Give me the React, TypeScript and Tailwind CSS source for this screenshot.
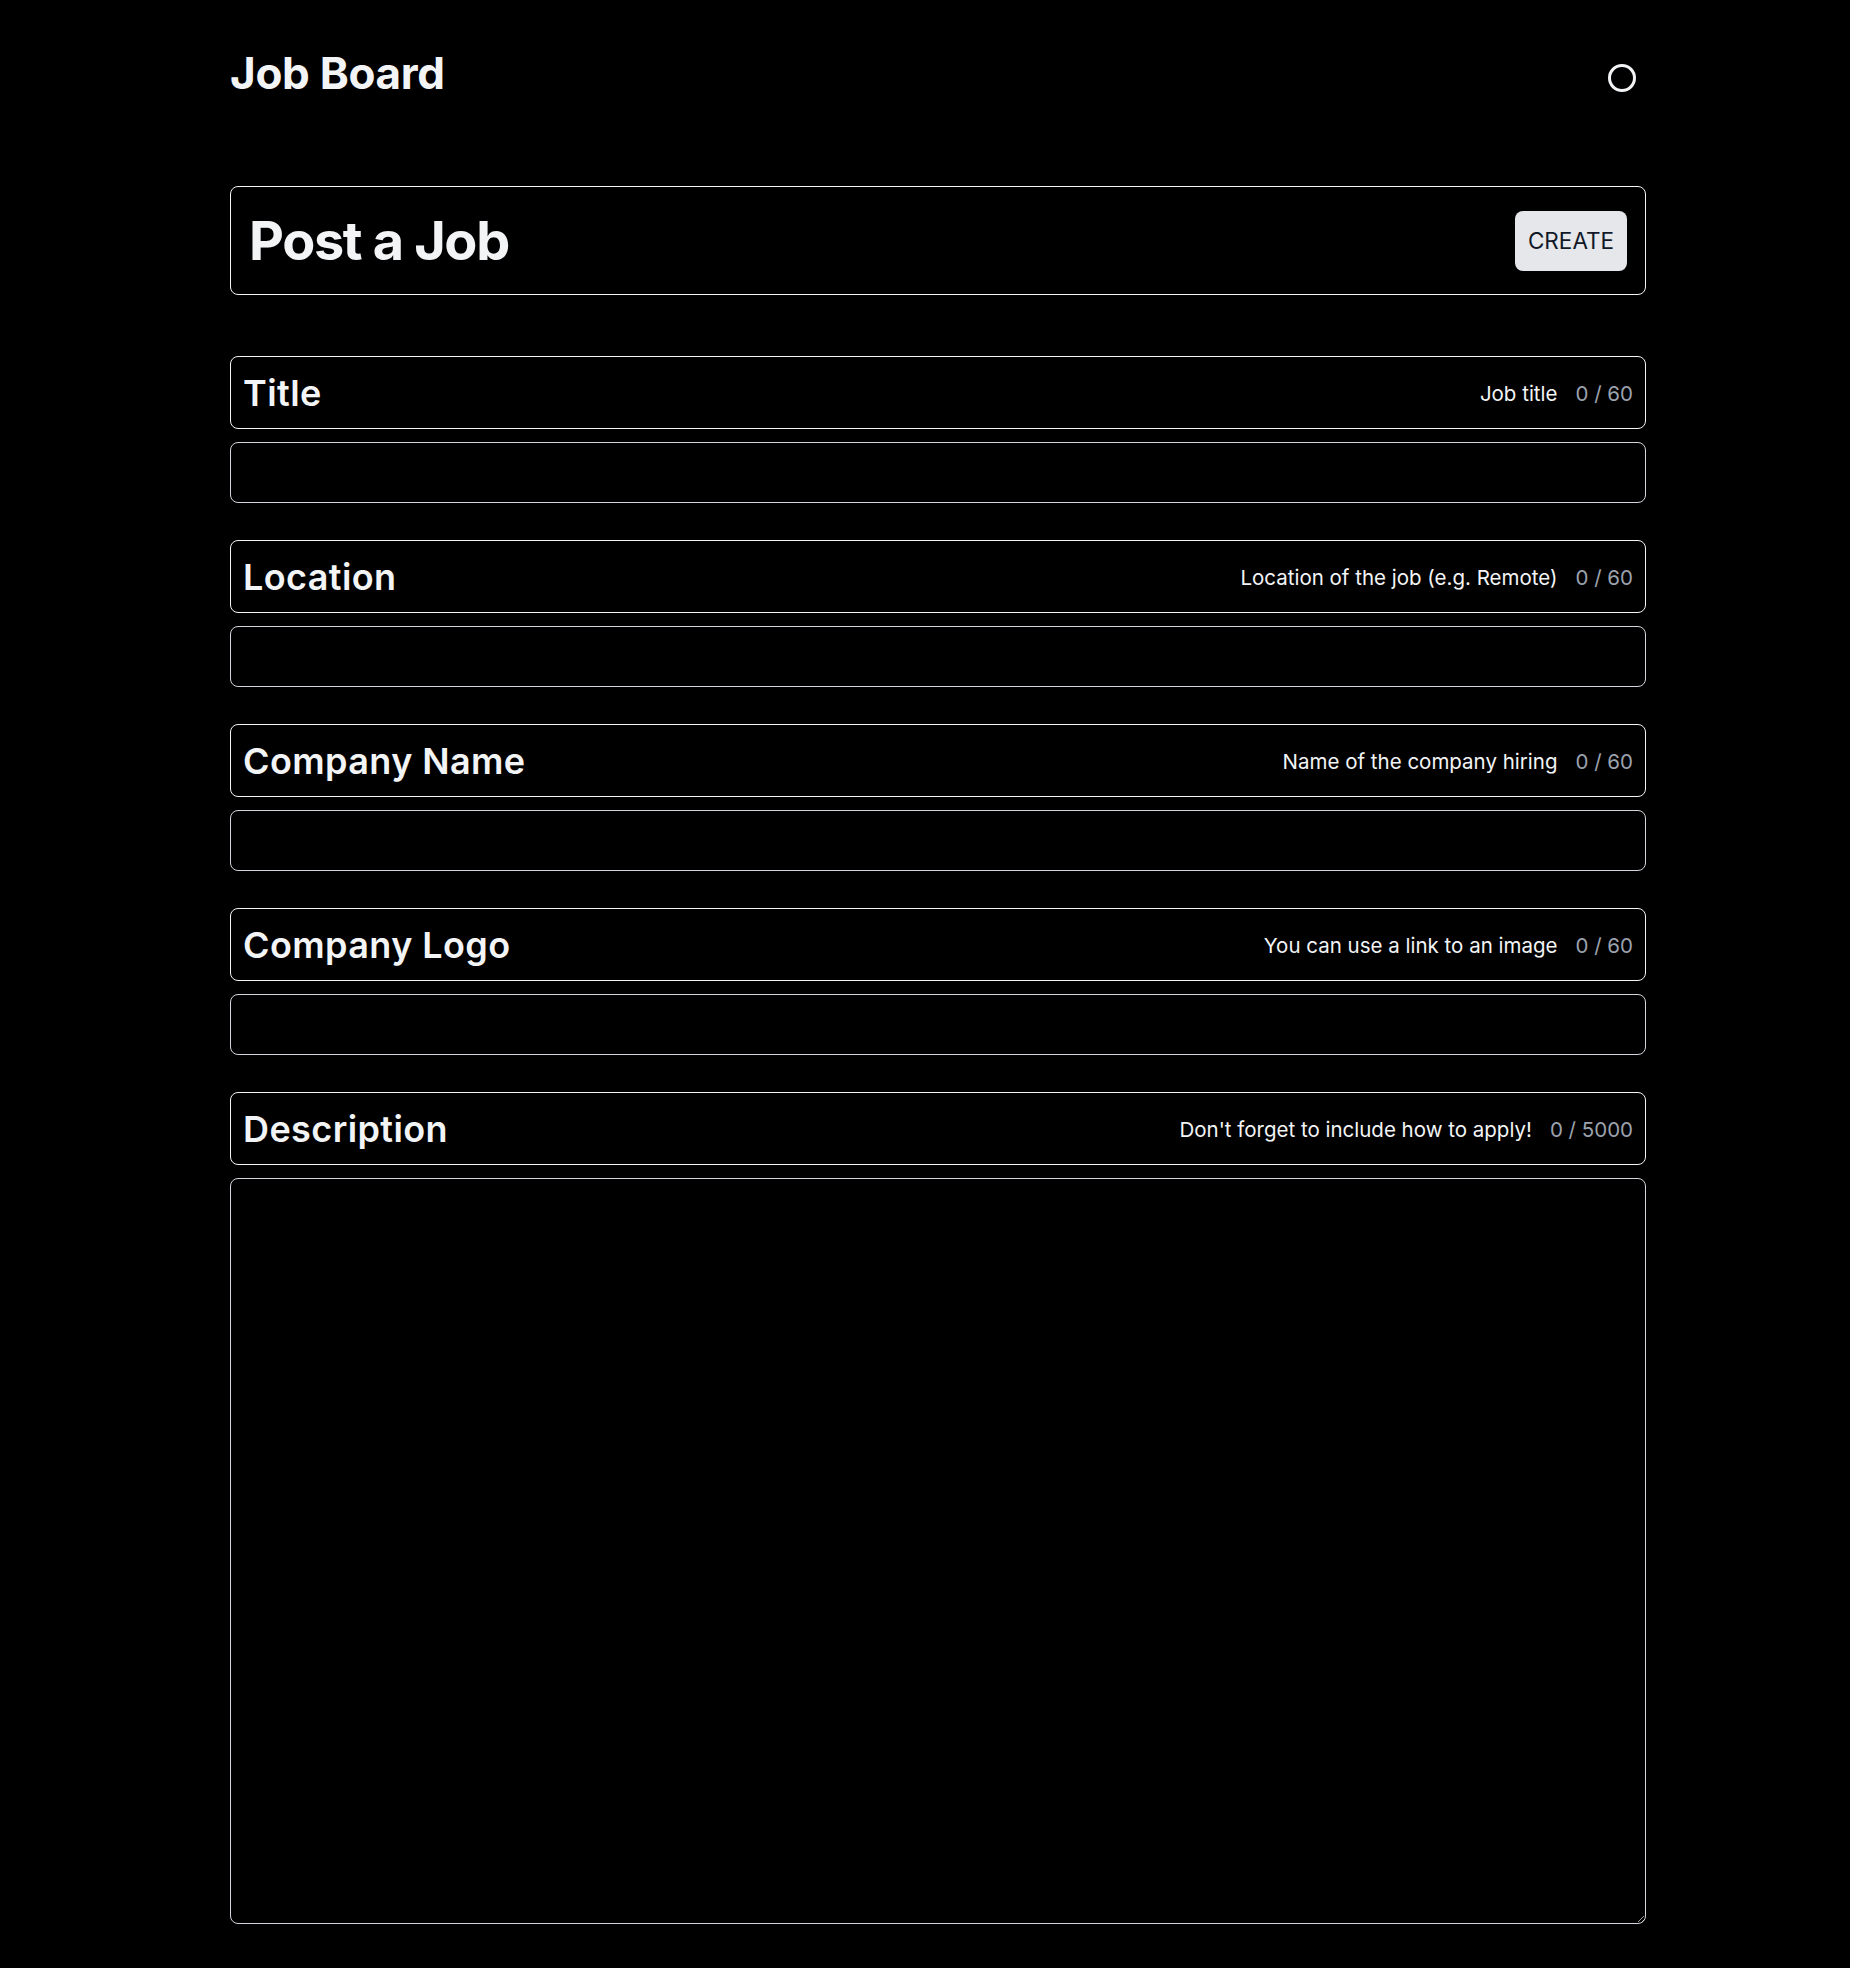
import React from "react";

type Field = { label: string; hint: string; max: number };

const fields: Field[] = [
  { label: "Title", hint: "Job title", max: 60 },
  { label: "Location", hint: "Location of the job (e.g. Remote)", max: 60 },
  { label: "Company Name", hint: "Name of the company hiring", max: 60 },
  { label: "Company Logo", hint: "You can use a link to an image", max: 60 },
];

function Header({ f }: { f: Field }) {
  return (
    <div className="h-[73px] border border-[#f3f4f6] rounded-[8px] flex items-center justify-between pl-[12px] pr-[12px]">
      <span className="text-[36px] leading-none font-semibold tracking-[0.4px] text-[#f3f4f6]">{f.label}</span>
      <span className="flex items-center text-[20.5px] leading-none pt-[3px]">
        <span className="text-[#f3f4f6]">{f.hint}</span>
        <span className="ml-[18px] text-[#9ca3af]">0 / {f.max}</span>
      </span>
    </div>
  );
}

export default function App() {
  return (
    <div className="min-h-[1968px] bg-black text-white" style={{ fontFamily: "Inter, 'Noto Sans', sans-serif" }}>
      <div className="ml-[230px] w-[1416px] pb-[45px]">
        <div className="flex items-start justify-between pt-[51px]">
          <h1 className="text-[44px] leading-none font-bold tracking-[-0.3px] text-[#f3f4f6]">Job Board</h1>
          <div className="mt-[13px] mr-[10px] w-[28px] h-[28px] rounded-full border-[3px] border-[#f3f4f6]" />
        </div>

        <div className="mt-[91px] h-[109px] border border-[#f3f4f6] rounded-[8px] flex items-center justify-between pl-[18px] pr-[18px]">
          <h2 className="text-[54px] leading-none font-bold text-[#f3f4f6] tracking-tight">Post a Job</h2>
          <button className="w-[112px] h-[60px] rounded-[8px] bg-[#e5e7eb] text-[#111827] text-[22.5px] leading-none pt-[2px]">
            CREATE
          </button>
        </div>

        <div className="mt-[61px] flex flex-col">
          {fields.map((f) => (
            <div key={f.label} className="flex flex-col mb-[37px]">
              <Header f={f} />
              <input
                className="mt-[13px] h-[61px] bg-black border border-[#d1d5db] rounded-[8px] px-3 text-white outline-none"
                aria-label={f.label}
              />
            </div>
          ))}
          <div className="flex flex-col">
            <Header f={{ label: "Description", hint: "Don't forget to include how to apply!", max: 5000 }} />
            <textarea
              className="mt-[13px] h-[746px] bg-black border border-[#d1d5db] rounded-[8px] p-3 text-white outline-none"
              aria-label="Description"
            />
          </div>
        </div>
      </div>
    </div>
  );
}
